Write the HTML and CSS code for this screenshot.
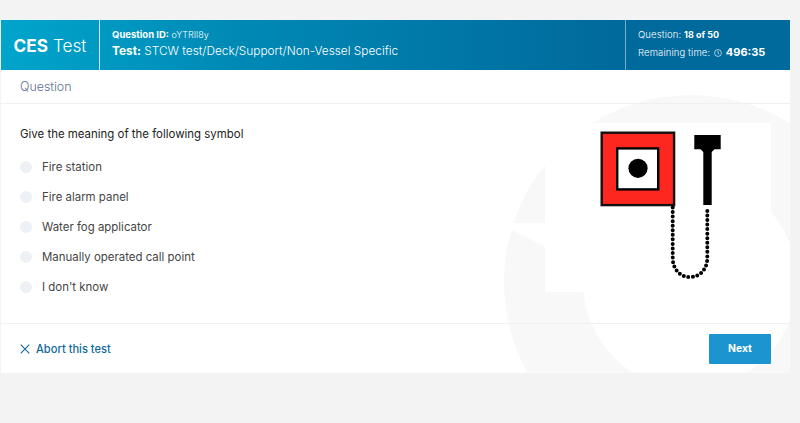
FILE: index.html
```html
<!DOCTYPE html>
<html lang="en">
<head>
<meta charset="utf-8">
<title>CES Test</title>
<link rel="stylesheet" href="styles.css">
</head>
<body>
<main class="card">
  <svg class="watermark" viewBox="1 20 789 353" width="789" height="353" aria-hidden="true">
    <path class="wm-ring" fill-rule="evenodd" d="M504 282a187 187 0 1 0 374 0a187 187 0 1 0-374 0ZM583 282a107 107 0 1 0 214 0a107 107 0 1 0-214 0Z"/>
    <path class="wm-gap" d="M500 223H560V254L514 231Q510 229 500 229Z"/>
  </svg>
  <header class="header">
    <div class="brand"><strong>CES</strong> Test</div>
    <div class="info">
      <div class="info-id"><strong>Question ID:</strong> oYTRIl8y</div>
      <div class="info-test"><strong>Test:</strong> STCW test/Deck/Support/Non-Vessel Specific</div>
    </div>
    <div class="status">
      <div class="status-line">Question: <strong>18 of 50</strong></div>
      <div class="status-line">Remaining time:
        <svg class="clock" viewBox="0 0 10 10" width="8" height="8"><circle cx="5" cy="5" r="4.3"/><path d="M5 2.4V5.3L6.6 6.4"/></svg>
        <strong class="time">496:35</strong>
      </div>
    </div>
  </header>
  <div class="tabbar">Question</div>
  <section class="question">
    <div class="answers">
      <p class="prompt">Give the meaning of the following symbol</p>
      <ul class="options">
        <li class="option"><span class="radio"></span>Fire station</li>
        <li class="option"><span class="radio"></span>Fire alarm panel</li>
        <li class="option"><span class="radio"></span>Water fog applicator</li>
        <li class="option"><span class="radio"></span>Manually operated call point</li>
        <li class="option"><span class="radio"></span>I don't know</li>
      </ul>
    </div>
    <svg class="symbol" viewBox="545 123 226 169" width="226" height="169" role="img" aria-label="Symbol">
      <rect x="545" y="123" width="226" height="169" fill="#fff"/>
      <rect x="601.7" y="132.7" width="72.4" height="72.4" fill="#fe2720" stroke="#111" stroke-width="2.4"/>
      <rect x="617.2" y="148.4" width="41" height="41" fill="#fff" stroke="#000" stroke-width="2.4"/>
      <circle cx="638" cy="168.3" r="9.6" fill="#000"/>
      <path d="M694.3 135H720.7V149.3H714.5L711.7 152V205H703.3V152L700.5 149.3H694.3Z" fill="#000"/>
      <path d="M672.7 207.5V258C672.7 269 680 277 690 277S707.3 269 707.3 258V207.5" fill="none" stroke="#000" stroke-width="4" stroke-linecap="round" stroke-dasharray="0 4.55"/>
    </svg>
  </section>
  <footer class="footer">
    <a class="abort" href="#">
      <svg class="abort-icon" viewBox="0 0 10 10" width="10" height="10"><path d="M.7.7 9.3 9.3M9.3.7.7 9.3"/></svg>
      Abort this test
    </a>
    <button class="next" type="button">Next</button>
  </footer>
</main>
</body>
</html>
```
FILE: styles.css
```css
* { box-sizing: border-box; }
html, body { margin: 0; height: 100%; }
body {
  background: #f3f3f3;
  padding: 20px 10px 0 1px;
  font-family: "Inter", "Liberation Sans", sans-serif;
  overflow: hidden;
}
.card {
  position: relative;
  width: 789px;
  height: 353px;
  background: #fff;
  overflow: hidden;
}
.watermark { position: absolute; left: 0; top: 0; }
.wm-ring { fill: #f8f8f8; }
.wm-gap { fill: #fff; }

.header {
  position: relative;
  display: flex;
  height: 50px;
  color: #fff;
  background: linear-gradient(90deg, #00a5cc 0, #0089b5 30%, #006a9c 78%);
}
.brand {
  width: 99px;
  border-right: 1px solid rgba(255,255,255,.8);
  display: flex;
  align-items: center;
  justify-content: center;
  gap: 5px;
  font-size: 17.2px;
  font-weight: 300;
}
.brand strong { font-weight: 700; }
.info {
  flex: 1;
  padding: 8px 0 0 12px;
}
.info-id { font-size: 9px; line-height: 13px; font-weight: 300; }
.info-id strong { font-weight: 700; font-size: 9.5px; }
.info-test { font-size: 11.85px; line-height: 17px; margin-top: 2px; font-weight: 300; }
.info-test strong { font-weight: 700; }
.status {
  width: 165px;
  border-left: 1px solid rgba(255,255,255,.45);
  padding: 8px 0 0 12px;
  font-size: 9.5px;
  font-weight: 300;
}
.status-line { line-height: 14px; margin-bottom: 3px; white-space: nowrap; letter-spacing: .12px; }
.status-line strong { font-weight: 700; font-size: 9px; letter-spacing: 0; }
.status-line .time { font-size: 11px; margin-left: 1px; }
.clock { fill: none; stroke: #fff; stroke-width: .8; vertical-align: -1px; margin-left: 1px; }

.tabbar {
  position: relative;
  height: 34px;
  border-bottom: 1px solid #eff0f3;
  padding: 9px 0 0 19px;
  font-size: 12.4px;
  line-height: 15px;
  font-weight: 300;
  color: #5c7190;
}

.question {
  position: relative;
  display: flex;
  justify-content: space-between;
  height: 220px;
  padding: 19px 19px 0 19px;
  border-bottom: 1px solid #f0f0f6;
}
.prompt {
  margin: 4px 0 0;
  font-size: 11.45px;
  line-height: 15px;
  color: #222;
}
.options { list-style: none; margin: 10px 0 0; padding: 0; }
.option {
  display: flex;
  align-items: center;
  height: 30px;
  font-size: 11.45px;
  color: #444;
}
.radio {
  width: 12px;
  height: 12px;
  border-radius: 50%;
  background: #edf1f6;
  margin-right: 10px;
}
.symbol { display: block; }

.footer {
  position: relative;
  display: flex;
  align-items: center;
  justify-content: space-between;
  height: 49px;
  padding: 0 19px;
}
.abort {
  display: flex;
  align-items: center;
  gap: 6px;
  color: #0f6a9b;
  font-size: 11.1px;
  font-weight: 500;
  text-decoration: none;
}
.abort-icon { fill: none; stroke: #0f6a9b; stroke-width: 1.1; }
.next {
  width: 62px;
  height: 30px;
  border: 0;
  border-radius: 1px;
  background: #1c94d0;
  color: #fff;
  font: 700 10.4px "Inter", "Liberation Sans", sans-serif;
  padding: 0;
}
```
